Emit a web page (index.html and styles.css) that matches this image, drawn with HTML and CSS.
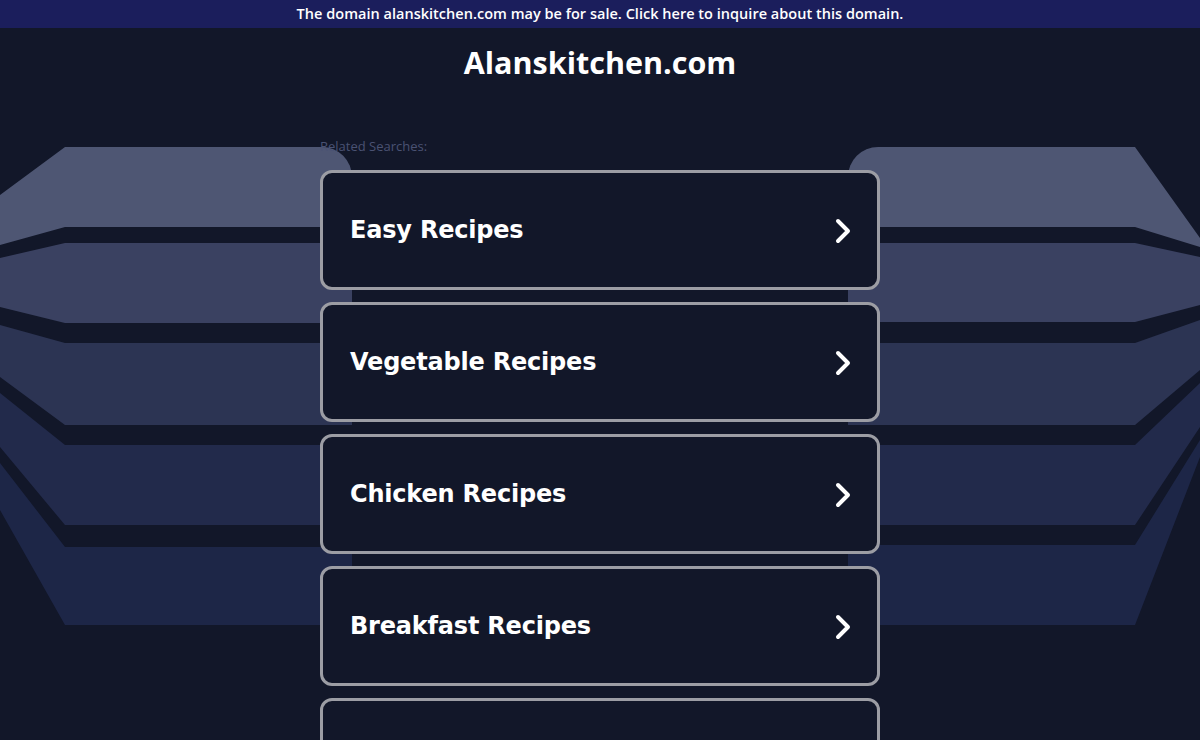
FILE: index.html
```html
<!DOCTYPE html>
<html lang="en">
<head>
<meta charset="utf-8">
<title>Alanskitchen.com</title>
<link rel="stylesheet" href="styles.css">
</head>
<body>
<div class="page">
  <svg class="bg-art" width="1200" height="740" viewBox="0 0 1200 740" aria-hidden="true">
    <defs>
      <clipPath id="clipL"><rect x="-40" y="147" width="392" height="478" rx="30"/></clipPath>
      <clipPath id="clipR"><rect x="848" y="147" width="400" height="478" rx="30"/></clipPath>
    </defs>
    <g clip-path="url(#clipL)">
      <polygon fill="#4e5673" points="0,195 65,147 360,147 360,227 65,227 0,245"/>
      <polygon fill="#3a4161" points="0,258 65,243 360,243 360,323 65,323 0,307"/>
      <polygon fill="#2c3453" points="0,325 65,343 360,343 360,425 65,425 0,377"/>
      <polygon fill="#222a4b" points="0,393 65,445 360,445 360,525 65,525 0,447"/>
      <polygon fill="#1d2647" points="0,463 65,547 360,547 360,625 65,625 0,510"/>
    </g>
    <g clip-path="url(#clipR)">
      <polygon fill="#4e5673" points="840,147 1135,147 1200,238 1200,247 1135,227 840,227"/>
      <polygon fill="#3a4161" points="840,243 1135,243 1200,257 1200,305 1135,322 840,322"/>
      <polygon fill="#2c3453" points="840,343 1135,343 1200,320 1200,370 1135,425 840,425"/>
      <polygon fill="#222a4b" points="840,445 1135,445 1200,383 1200,427 1135,525 840,525"/>
      <polygon fill="#1d2647" points="840,545 1135,545 1200,440 1200,457 1135,625 840,625"/>
    </g>
  </svg>

  <a class="sale-bar" href="#">The domain alanskitchen.com may be for sale. Click here to inquire about this domain.</a>

  <h1 class="site-title">Alanskitchen.com</h1>

  <main class="content">
    <p class="related">Related Searches:</p>
    <ul class="links">
      <li><a class="link-card" href="#"><span class="link-text">Easy Recipes</span><svg class="chev" width="18" height="26" viewBox="0 0 18 26"><path d="M4 3 L14 13 L4 23" fill="none" stroke="#fff" stroke-width="4" stroke-linecap="round" stroke-linejoin="round"/></svg></a></li>
      <li><a class="link-card" href="#"><span class="link-text">Vegetable Recipes</span><svg class="chev" width="18" height="26" viewBox="0 0 18 26"><path d="M4 3 L14 13 L4 23" fill="none" stroke="#fff" stroke-width="4" stroke-linecap="round" stroke-linejoin="round"/></svg></a></li>
      <li><a class="link-card" href="#"><span class="link-text">Chicken Recipes</span><svg class="chev" width="18" height="26" viewBox="0 0 18 26"><path d="M4 3 L14 13 L4 23" fill="none" stroke="#fff" stroke-width="4" stroke-linecap="round" stroke-linejoin="round"/></svg></a></li>
      <li><a class="link-card" href="#"><span class="link-text">Breakfast Recipes</span><svg class="chev" width="18" height="26" viewBox="0 0 18 26"><path d="M4 3 L14 13 L4 23" fill="none" stroke="#fff" stroke-width="4" stroke-linecap="round" stroke-linejoin="round"/></svg></a></li>
      <li><a class="link-card link-card-last" href="#"></a></li>
    </ul>
  </main>
</div>
</body>
</html>
```
FILE: styles.css
```css
html, body {
  margin: 0;
  padding: 0;
  background: #121729;
}
body {
  font-family: "Open Sans", "DejaVu Sans", sans-serif;
  color: #fff;
  overflow: hidden;
}
.page {
  position: relative;
  width: 1200px;
  height: 740px;
  overflow: hidden;
}
.bg-art {
  position: absolute;
  top: 0;
  left: 0;
  z-index: 0;
}
.sale-bar {
  position: relative;
  z-index: 1;
  display: block;
  height: 28px;
  line-height: 28px;
  background: #1b1e5c;
  color: #fff;
  text-align: center;
  font-size: 14.5px;
  font-weight: 600;
  text-decoration: none;
  letter-spacing: 0.02px;
}
.site-title {
  position: relative;
  z-index: 1;
  margin: 0;
  padding-top: 16px;
  height: 36px;
  line-height: 36px;
  text-align: center;
  font-size: 30.5px;
  font-weight: 700;
  color: #fff;
}
.content {
  position: relative;
  z-index: 1;
  width: 560px;
  margin: 0 auto;
  padding-top: 58px;
}
.related {
  margin: 0 0 16px;
  font-size: 13px;
  line-height: 16px;
  color: #4a5273;
}
.links {
  list-style: none;
  margin: 0;
  padding: 0;
  display: flex;
  flex-direction: column;
  gap: 12px;
}
.link-card {
  box-sizing: border-box;
  height: 120px;
  display: flex;
  align-items: center;
  justify-content: space-between;
  padding: 0 25px 0 27px;
  border: 3px solid #9c9da4;
  border-radius: 12px;
  background: #121729;
  text-decoration: none;
  color: #fff;
}
.link-text {
  font-family: "DejaVu Sans", Verdana, sans-serif;
  font-weight: 700;
  font-size: 24px;
  letter-spacing: -0.2px;
}
.chev {
  display: block;
  margin-top: 1px;
}
```
